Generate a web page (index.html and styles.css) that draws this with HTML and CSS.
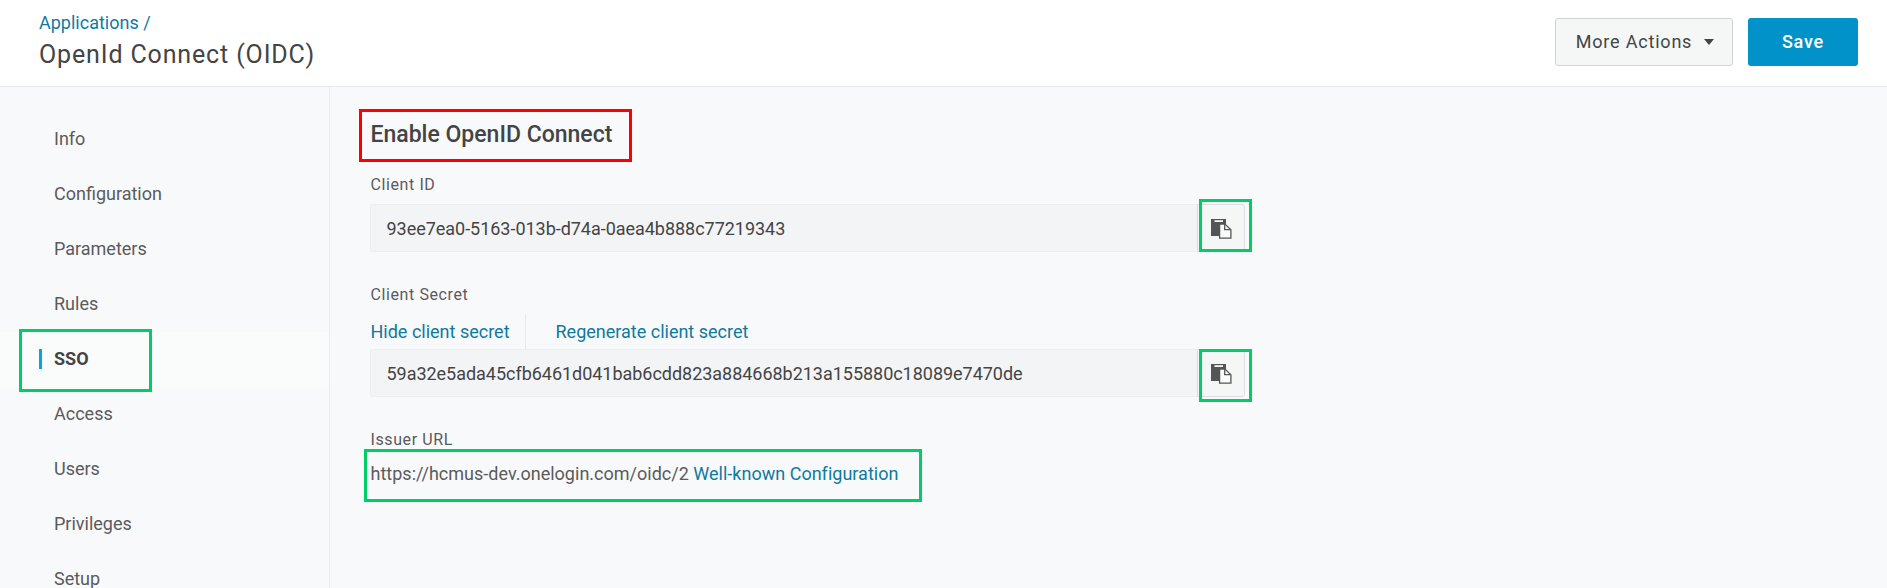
FILE: index.html
```html
<!DOCTYPE html>
<html lang="en">
<head>
  <meta charset="UTF-8">
  <title>OpenId Connect (OIDC)</title>
  <link rel="stylesheet" href="styles.css">
</head>
<body>

  <header class="header">
    <div class="header-title">
      <a class="breadcrumb" href="#">Applications /</a>
      <h1>OpenId Connect (OIDC)</h1>
    </div>
    <div class="header-actions">
      <button class="btn btn-more">More Actions <span class="caret"></span></button>
      <button class="btn btn-save">Save</button>
    </div>
  </header>

  <div class="page">
    <!-- Side menu -->
    <nav class="sidebar">
      <a href="#">Info</a>
      <a href="#">Configuration</a>
      <a href="#">Parameters</a>
      <a href="#">Rules</a>
      <a href="#" class="active">SSO<span class="mark mark-sso"></span></a>
      <a href="#">Access</a>
      <a href="#">Users</a>
      <a href="#">Privileges</a>
      <a href="#">Setup</a>
    </nav>

    <main class="content">
      <h2>Enable OpenID Connect<span class="mark mark-title"></span></h2>

      <!-- Client ID -->
      <div class="label">Client ID</div>
      <div class="field">
        <div class="value">93ee7ea0-5163-013b-d74a-0aea4b888c77219343</div>
        <button class="copy">
          <svg width="21" height="21" viewBox="0 0 21 21">
            <path d="M0 1h15v6H8v11H0z" fill="#555"/>
            <path d="M3.500 2.200h8.500v1.800H3.500z" fill="#f5f7f7"/>
            <path d="M8.600 6.100h5.400l5.900 5.600v8.500H8.600z" fill="#fafbfb" stroke="#555" stroke-width="1.300"/>
            <path d="M13.700 6.100v5.600h6.200" fill="none" stroke="#555" stroke-width="1.300"/>
          </svg>
        </button>
        <span class="mark mark-id"></span>
      </div>

      <!-- Client Secret -->
      <div class="label label-secret">Client Secret</div>
      <div class="links">
        <a href="#">Hide client secret</a>
        <a href="#">Regenerate client secret</a>
      </div>
      <div class="field">
        <div class="value">59a32e5ada45cfb6461d041bab6cdd823a884668b213a155880c18089e7470de</div>
        <button class="copy">
          <svg width="21" height="21" viewBox="0 0 21 21">
            <path d="M0 1h15v6H8v11H0z" fill="#555"/>
            <path d="M3.500 2.200h8.500v1.800H3.500z" fill="#f5f7f7"/>
            <path d="M8.600 6.100h5.400l5.900 5.600v8.500H8.600z" fill="#fafbfb" stroke="#555" stroke-width="1.300"/>
            <path d="M13.700 6.100v5.600h6.200" fill="none" stroke="#555" stroke-width="1.300"/>
          </svg>
        </button>
        <span class="mark mark-secret"></span>
      </div>

      <!-- Issuer URL -->
      <div class="label label-issuer">Issuer URL</div>
      <div class="issuer">
        https://hcmus-dev.onelogin.com/oidc/2 <a href="#">Well-known Configuration</a>
        <span class="mark mark-issuer"></span>
      </div>
    </main>
  </div>

</body>
</html>
```

FILE: styles.css
```css
* {
  box-sizing: border-box;
}

body {
  font-family: Roboto, sans-serif;
  font-size: 18px;
  color: #5b5b5b;
  background: #f8f9fb;
  margin: 0;
  height: 588px;
  overflow: hidden;
}

a {
  color: #0f7a9f;
  text-decoration: none;
}

.header {
  display: flex;
  justify-content: space-between;
  height: 87px;
  padding: 12px 29px 0 39px;
  background: #fff;
  border-bottom: 1px solid #e6e8ec;
}

.breadcrumb {
  display: block;
  line-height: 22px;
}

h1 {
  margin: 5px 0 0;
  font-size: 25px;
  font-weight: 400;
  line-height: 32px;
  letter-spacing: 0.86px;
  color: #444;
}

.header-actions {
  display: flex;
  gap: 15px;
  padding-top: 6px;
}

.btn {
  display: flex;
  align-items: center;
  justify-content: center;
  height: 48px;
  padding: 0 0 2px;
  font-family: inherit;
  font-size: 18px;
  letter-spacing: 0.8px;
  border: none;
  border-radius: 3px;
}

.btn-more {
  width: 178px;
  padding-left: 2px;
  color: #444;
  background: #f5f7f7;
  border: 1px solid #d0d4d5;
}

.btn-save {
  width: 110px;
  color: #fff;
  font-weight: 500;
  background: #0092c8;
}

.caret {
  margin: 2px 0 0 12px;
  border: 5.5px solid transparent;
  border-top: 6px solid #444;
  border-bottom: none;
}

.page {
  display: flex;
  height: 501px;
}

.sidebar {
  width: 330px;
  padding-top: 25px;
  border-right: 1px solid #eaecef;
}

.sidebar a {
  display: block;
  height: 55px;
  padding-left: 54px;
  line-height: 53px;
  color: #5b5b5b;
}

.sidebar .active {
  position: relative;
  display: flex;
  align-items: center;
  padding-left: 39px;
  padding-bottom: 2px;
  font-weight: 700;
  color: #444;
  background: #fafcfb;
}

.sidebar .active::before {
  content: "";
  width: 3px;
  height: 20px;
  margin-top: 1px;
  margin-right: 12px;
  background: #00a8df;
}

.content {
  flex: 1;
  padding: 33px 0 0 40px;
}

h2 {
  position: relative;
  margin: 0 0 25px;
  padding-left: 0.5px;
  font-size: 23px;
  font-weight: 500;
  line-height: 30px;
  color: #444;
}

.label {
  height: 20px;
  margin-bottom: 9px;
  padding-left: 0.5px;
  font-size: 16px;
  line-height: 20px;
  letter-spacing: 0.6px;
}

.field {
  position: relative;
  display: flex;
  width: 875px;
  height: 48px;
}

.value {
  flex: 1;
  padding: 1px 0 0 15.5px;
  line-height: 46px;
  letter-spacing: -0.03px;
  color: #444;
  background: #f3f4f5;
  border: 1px solid #eceef0;
  border-right: none;
  border-radius: 3px 0 0 3px;
}

.copy {
  display: flex;
  align-items: center;
  width: 48px;
  padding: 1px 0 0 13px;
  background: #f5f7f7;
  border: 1px solid #dcdfe0;
  border-radius: 0 3px 3px 0;
}

.label-secret {
  margin-top: 33px;
}

.links {
  display: flex;
  height: 35px;
  line-height: 35px;
}

.links a {
  padding-left: 0.5px;
}

.links a:first-child {
  width: 156px;
  margin-right: 29px;
  border-right: 1px solid #e6e8ec;
}

.label-issuer {
  margin-top: 33px;
  margin-bottom: 0;
}

.issuer {
  position: relative;
  height: 48px;
  padding-left: 0.5px;
  line-height: 48px;
  letter-spacing: 0.01px;
}

/* Highlight frames */
.mark {
  position: absolute;
  border: 3px solid #00cd66;
}

.mark-sso {
  top: -3px;
  left: 19px;
  width: 133px;
  height: 63px;
}

.mark-title {
  top: -11px;
  left: -11px;
  width: 273px;
  height: 53px;
  border-color: #f00;
}

.mark-id,
.mark-secret {
  top: -5px;
  right: -7px;
  width: 53px;
  height: 53px;
}

.mark-secret {
  top: 0;
}

.mark-issuer {
  top: -1px;
  left: -6px;
  width: 558px;
  height: 53px;
}
```
